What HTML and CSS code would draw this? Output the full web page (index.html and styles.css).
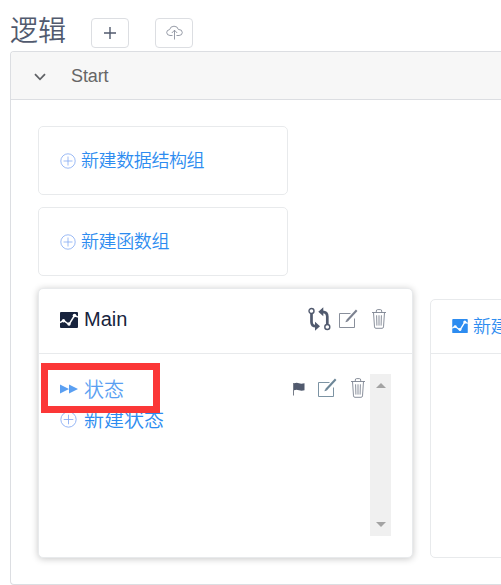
FILE: index.html
```html
<!DOCTYPE html>
<html lang="zh-CN">
<head>
<meta charset="utf-8">
<title>逻辑</title>
<link rel="stylesheet" href="styles.css">
</head>
<body>
<svg class="defs" width="0" height="0" aria-hidden="true">
  <symbol id="plus-circle" viewBox="0 0 16 16"><g fill="none" stroke="currentColor" stroke-width=".8"><circle cx="8" cy="8" r="7.2"/><path d="M8 3.5v9M3.5 8h9"/></g></symbol>
  <symbol id="chart" viewBox="0 0 18 16"><rect width="18" height="16" rx="1" fill="currentColor"/><path d="M0 10.5 3.5 8.5 9 12.5 14.5 3.5 18 5" fill="none" stroke="#fff" stroke-width="1.5"/><circle cx="3.5" cy="8.7" r="1.7" fill="#fff"/><circle cx="9" cy="12" r="1.7" fill="#fff"/><circle cx="14.5" cy="3.5" r="1.8" fill="#fff"/></symbol>
  <symbol id="edit" viewBox="0 0 20 20"><path d="M12.500 4.500H1.500v14h15V9.500" fill="none" stroke="currentColor" stroke-width=".9"/><path d="M9 11.700 18.700 1.300" fill="none" stroke="currentColor" stroke-width="2.100"/><path d="M7.400 13.200 8.200 10.900l1.700 1.600z" fill="currentColor"/></symbol>
  <symbol id="trash" viewBox="0 0 14 20"><g fill="none" stroke="currentColor" stroke-width=".9"><path d="M0 3.500h14M4.300 3.500V2Q4.300.6 5.700.6h2.600Q9.700.6 9.700 2v1.500M1.500 3.500l1 14.400q.1 1.400 1.400 1.400h6.200q1.300 0 1.400-1.400l1-14.400"/><path d="M4.600 6.300l.3 10.300M7 6.300v10.300M9.400 6.300l-.3 10.300"/></g></symbol>
</svg>
<header class="top">
  <h1>逻辑</h1>
  <button class="btn" aria-label="添加"><svg width="12" height="12" viewBox="0 0 12 12"><path d="M6 0v12M0 6h12" stroke="#515a6e" stroke-width="1.400"/></svg></button>
  <button class="btn" aria-label="上传"><svg width="17" height="16" viewBox="0 0 17 16"><g fill="none" stroke="#858b98" stroke-width=".85"><path d="M6.500 10.500H4Q.8 10.300.7 7.500.7 5 3.600 4.600 4.400 1.200 8 1.200q3.600 0 4.300 3.200 4 0 4 3.100 0 2.800-3.200 3h-2.600"/><path d="M8.500 14.500V5.300M5.800 8l2.700-2.800L11.200 8"/></g></svg></button>
</header>
<main class="panel">
  <div class="panel-head">
    <svg width="12" height="8" viewBox="0 0 12 8"><path d="M1 1.200 6 6.300 11 1.200" fill="none" stroke="#606266" stroke-width="1.800"/></svg>
    <span>Start</span>
  </div>
  <div class="panel-body">
    <a class="card add"><svg width="16" height="16"><use href="#plus-circle"/></svg><span>新建数据结构组</span></a>
    <a class="card add"><svg width="16" height="16"><use href="#plus-circle"/></svg><span>新建函数组</span></a>
    <div class="flows">
      <section class="card flow">
        <div class="card-head">
          <svg class="chart" width="18" height="16"><use href="#chart"/></svg>
          <span class="name">Main</span>
          <svg class="compare" width="23" height="24" viewBox="0 0 23 24"><g fill="none" stroke="#515a6e"><circle cx="3.500" cy="4" r="2.500" stroke-width="1.400"/><circle cx="19.300" cy="20" r="2.500" stroke-width="1.400"/><path d="M3.500 6.500V15q0 4.200 4.500 4.200M19.300 17.500V9.500q0-4.700-4.800-4.700" stroke-width="2.700"/></g><path d="M7 14.700v9l5-4.500zM15.300.3v9l-5-4.500z" fill="#515a6e"/></svg>
          <svg class="edit" width="20" height="20"><use href="#edit"/></svg>
          <svg class="trash" width="14" height="20"><use href="#trash"/></svg>
        </div>
        <div class="states">
          <div class="list">
            <div class="state">
              <svg class="forward" width="18" height="10" viewBox="0 0 18 10"><path d="M0 .5 9 5 0 9.500zM9 .5 18 5 9 9.500z" fill="#5a9ff2"/></svg>
              <span class="label">状态</span>
              <svg class="flag" width="12" height="14" viewBox="0 0 12 14"><path d="M.5 1v12.500" stroke="#777d89"/><path d="M1 1.200q3-.9 5 0t5.500 0v7q-3 .9-5.500 0T1 8.200z" fill="#515a6e"/></svg>
              <svg class="edit" width="20" height="20"><use href="#edit"/></svg>
              <svg class="trash" width="14" height="20"><use href="#trash"/></svg>
            </div>
            <div class="new-state"><svg width="17" height="17"><use href="#plus-circle"/></svg><span>新建状态</span></div>
          </div>
          <div class="scroll"><i class="up"></i><i class="down"></i></div>
          <div class="highlight"></div>
        </div>
      </section>
      <section class="card next">
        <div class="next-head"><svg width="16" height="14" viewBox="0 0 18 16"><use href="#chart"/></svg><span>新建</span></div>
      </section>
    </div>
  </div>
</main>
</body>
</html>
```
FILE: styles.css
```css
* { box-sizing: border-box; }
body {
  margin: 0;
  width: 501px;
  height: 585px;
  overflow: hidden;
  background: #fff;
  color: #515a6e;
  font-family: "Liberation Sans", "Noto Sans CJK SC", sans-serif;
  font-weight: 350;
}
.defs { position: absolute; }
svg { display: block; flex: none; }
.top { display: flex; height: 51px; padding-left: 10px; }
h1 { margin: 12px 0 0; width: 81px; font-size: 28px; line-height: 40px; font-weight: 350; }
.btn {
  display: flex; align-items: center; justify-content: center;
  width: 38px; height: 30px; margin: 18px 26px 0 0; padding: 0;
  background: #fff; border: 1px solid #dcdee2; border-radius: 4px;
}
.panel {
  width: 491px; height: 534px; margin-left: 10px; overflow: hidden;
  border: 1px solid #dcdee2; border-right: 0; border-radius: 4px 0 0 4px;
}
.panel-head {
  display: flex; align-items: center; gap: 25px;
  height: 48px; padding-left: 23px;
  background: #f7f7f7; border-bottom: 1px solid #dcdee2;
  color: #666; font-size: 18px;
}
.panel-head svg { margin-top: 2px; }
.panel-head span { margin-top: 2px; letter-spacing: -.1px; }
.panel-body { padding: 26px 0 0 27px; }
.card { background: #fff; border: 1px solid #e8eaec; border-radius: 5px; }
.add {
  display: flex; align-items: center; gap: 5px;
  width: 250px; height: 69px; margin-bottom: 12px; padding: 0 0 3px 21px;
  color: #2d8cf0; font-size: 18px; letter-spacing: -.4px;
}
.add svg { color: #83a9f3; margin-top: 3px; }
.flows { display: flex; align-items: flex-end; gap: 17px; height: 270px; }
.flow { flex: none; width: 375px; height: 270px; box-shadow: 0 1px 7px rgba(0, 0, 0, .22); }
.card-head {
  display: flex; align-items: center;
  height: 65px; padding: 0 26px 4px 21px; border-bottom: 1px solid #e8eaec;
}
.chart { color: #17233d; margin-top: 2px; }
.name { margin-left: 6px; color: #17233d; font-size: 20px; }
.compare { margin-left: auto; }
.card-head .edit { margin-left: 7px; }
.card-head .trash { margin-left: 14px; }
.edit, .trash { color: #7c8290; }
.states { position: relative; display: flex; height: 182px; padding: 20px 21px 0; }
.list { flex: 1; font-size: 20px; }
.state { display: flex; align-items: center; height: 29px; padding-right: 5px; }
.label { margin-left: 6px; color: #5a9ff2; }
.flag { margin-left: auto; }
.state .edit { margin: -2px 0 0 12px; color: #6d8798; }
.state .trash { margin: -2px 0 0 14px; }
.new-state { display: flex; align-items: center; gap: 7px; height: 31px; color: #2d8cf0; }
.new-state svg { color: #83a9f3; margin-top: 2px; }
.scroll {
  display: flex; flex-direction: column; justify-content: space-between; align-items: center;
  width: 21px; height: 162px; padding: 9px 0; background: #f0f0f0;
}
.up, .down { border: 5px solid transparent; border-top-width: 0; border-bottom: 5px solid #a3a3a3; }
.down { border-bottom: 0; border-top: 5px solid #a3a3a3; }
.highlight {
  position: absolute; left: 2px; top: 9px;
  width: 119px; height: 50px; border: 7px solid #fb3737;
}
.next { flex: none; width: 375px; height: 259px; }
.next-head {
  display: flex; align-items: center; gap: 5px;
  height: 54px; padding: 0 0 3px 21px; border-bottom: 1px solid #e8eaec;
  color: #2d8cf0; font-size: 18px; letter-spacing: -.4px;
}
.next-head svg { margin-top: 1px; }
```
